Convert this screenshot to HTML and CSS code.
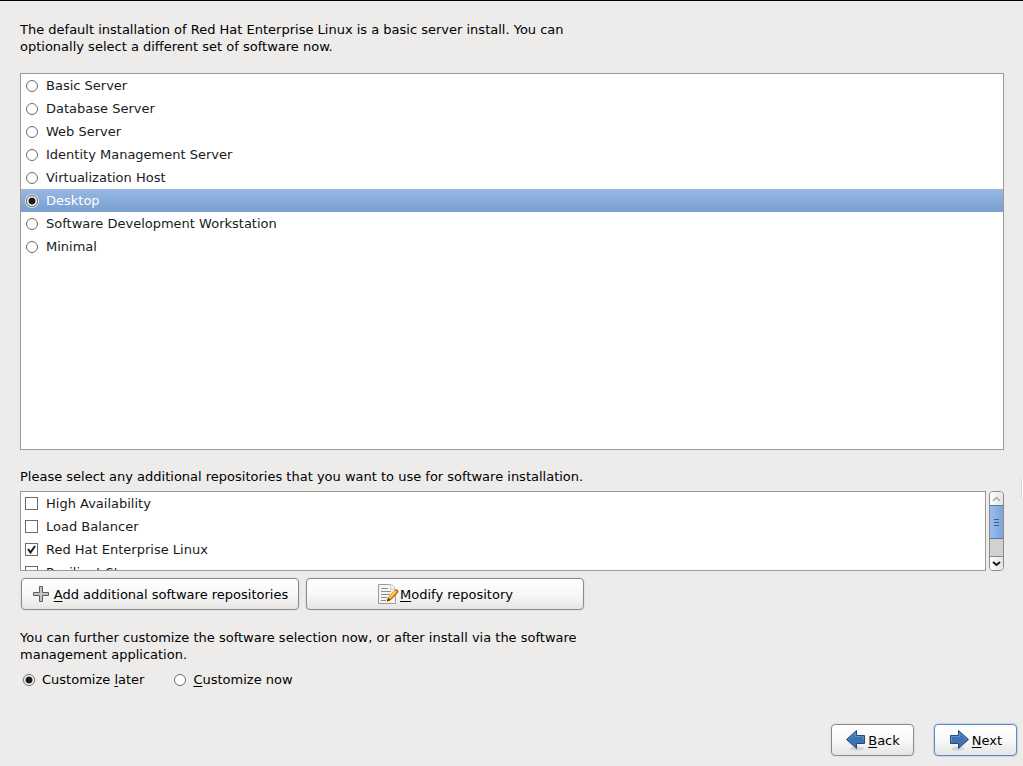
FILE: index.html
```html
<!DOCTYPE html>
<html lang="en">
<head>
    <meta charset="UTF-8">
    <title>Software selection</title>
    <link rel="stylesheet" href="styles.css">
</head>
<body>
    <form class="installer">
        <p class="intro" id="intro">The default installation of Red Hat Enterprise Linux is a basic server install. You can optionally select a different set of software now.</p>

        <div class="task-list" role="radiogroup" aria-labelledby="intro">
            <label class="row"><input type="radio" name="task"> Basic Server</label>
            <label class="row"><input type="radio" name="task"> Database Server</label>
            <label class="row"><input type="radio" name="task"> Web Server</label>
            <label class="row"><input type="radio" name="task"> Identity Management Server</label>
            <label class="row"><input type="radio" name="task"> Virtualization Host</label>
            <label class="row"><input type="radio" name="task" checked> Desktop</label>
            <label class="row"><input type="radio" name="task"> Software Development Workstation</label>
            <label class="row"><input type="radio" name="task"> Minimal</label>
        </div>

        <p class="repo-text">Please select any additional repositories that you want to use for software installation.</p>

        <div class="repos">
            <div class="repo-list">
                <label class="row"><input type="checkbox"> High Availability</label>
                <label class="row"><input type="checkbox"> Load Balancer</label>
                <label class="row"><input type="checkbox" checked> Red Hat Enterprise Linux</label>
                <label class="row"><input type="checkbox"> Resilient Storage</label>
            </div>
            <div class="scrollbar">
                <button type="button" class="step up" aria-label="Scroll up" disabled>
                    <svg width="9" height="6" viewBox="0 0 9 6"><path d="M1 5l3.500-3.500L8 5" fill="none" stroke="#aaa" stroke-width="1.500"/></svg>
                </button>
                <div class="track">
                    <div class="thumb">
                        <svg width="5" height="7" viewBox="0 0 5 7"><path d="M0 .5h5M0 3.500h5M0 6.500h5" stroke="#3a5f93"/></svg>
                    </div>
                </div>
                <button type="button" class="step down" aria-label="Scroll down">
                    <svg width="9" height="6" viewBox="0 0 9 6"><path d="M1 1l3.500 3L8 1" fill="none" stroke="#1a1a1a" stroke-width="2"/></svg>
                </button>
            </div>
        </div>

        <div class="repo-buttons">
            <button type="button" class="button">
                <svg class="add-icon" width="18" height="18" viewBox="0 0 18 18"><path d="M7.500 1.500h3v6h6v3h-6v6h-3v-6h-6v-3h6z" fill="#c4c4c2" stroke="#5c5c5c"/></svg>
                <span><u>A</u>dd additional software repositories</span>
            </button>
            <button type="button" class="button">
                <svg width="22" height="22" viewBox="0 0 22 22">
                    <path d="M1.500 1.500h10q5 0 7 6v13h-17z" fill="#f4f4f2" stroke="#9b9b98"/>
                    <path d="M12.500 1.500q2 2 1 5 3-1 5 1-1-6-6-6z" fill="#fff" stroke="#c0c0be"/>
                    <path d="M4 5.500h7M4 8.500h10M4 11.500h9M4 14.500h6M4 17.500h5" stroke="#8f8f8c"/>
                    <path d="M11.500 14.500l7-7.500q2-1 2.500 2l-7 7.500-3.500 1.500z" fill="#f57900" stroke="#b34700"/>
                    <path d="M12.500 15l6.500-7" stroke="#fcd23e" stroke-width="2"/>
                    <path d="M10 18.500l1-3 2 1.500z" fill="#3b2a1c"/>
                </svg>
                <span><u>M</u>odify repository</span>
            </button>
        </div>

        <p class="customize-text" id="customize">You can further customize the software selection now, or after install via the software management application.</p>

        <div class="customize" role="radiogroup" aria-labelledby="customize">
            <label><input type="radio" name="customize" checked> <span>Customize <u>l</u>ater</span></label>
            <label><input type="radio" name="customize"> <span><u>C</u>ustomize now</span></label>
        </div>

        <div class="navigation">
            <button type="button" class="button">
                <svg width="22" height="22" viewBox="0 0 22 22">
                    <ellipse cx="12" cy="19.500" rx="7" ry="2" fill="#000" opacity=".1"/>
                    <path d="M1.500 10.500L11.500 1.500v5h8v8h-8v5z" fill="#3f72b3" stroke="#204a87"/>
                    <path d="M3.500 10.500l7-6.500v3.500h8v3" fill="none" stroke="#729fcf" opacity=".7"/>
                </svg>
                <span><u>B</u>ack</span>
            </button>
            <button type="submit" class="button default">
                <svg width="22" height="22" viewBox="0 0 22 22">
                    <ellipse cx="9" cy="19.500" rx="7" ry="2" fill="#000" opacity=".1"/>
                    <path d="M19.500 10.500L9.500 1.500v5h-8v8h8v5z" fill="#3f72b3" stroke="#204a87"/>
                    <path d="M2.500 13.500v-6h8V4l7 6.500" fill="none" stroke="#729fcf" opacity=".7"/>
                </svg>
                <span><u>N</u>ext</span>
            </button>
        </div>
    </form>
    <div class="edge-handle"></div>
</body>
</html>
```

FILE: styles.css
```css
* {
    box-sizing: border-box;
}
body {
    margin: 0;
    background: #edeceb;
    color: #000;
    font-family: "DejaVu Sans", sans-serif;
    font-size: 13px;
    line-height: 17px;
}
.installer {
    display: flex;
    flex-direction: column;
    min-height: 100vh;
    border-top: 1px solid #000;
    padding: 20px 19px 10px 20px;
}
p {
    margin: 0;
}
.intro,
.customize-text {
    max-width: 570px;
}

/* lists */
.task-list,
.repo-list {
    background: #fff;
    border: 1px solid #9c9a98;
    color: #1a1a1a;
}
.task-list {
    flex: 1;
    margin: 18px 0;
}
.row {
    display: flex;
    align-items: center;
    gap: 8px;
    height: 23px;
    padding-left: 5px;
}
.task-list .row:has(:checked) {
    background: linear-gradient(#98b8e2, #789fd0);
    color: #fff;
}

/* radio buttons and tick boxes */
input {
    appearance: none;
    flex: none;
    width: 12px;
    height: 12px;
    margin: 1px 0 0;
    border: 1px solid #6b6b6b;
    background: #fff;
}
input[type="radio"] {
    border-radius: 50%;
}
input[type="radio"]:checked {
    background: radial-gradient(circle, #1a1a1a 3px, #fff 4px);
    box-shadow: 0 0 0 1px #e4e4e2;
}
input[type="checkbox"] {
    width: 13px;
    height: 13px;
    margin: 0 0 0 -1px;
}
input[type="checkbox"]:checked {
    background: #fff url("data:image/svg+xml,%3Csvg xmlns='http://www.w3.org/2000/svg' viewBox='0 0 11 11'%3E%3Cpath d='M2 5l2.500 3.500L9 2' fill='none' stroke='%231a1a1a' stroke-width='2'/%3E%3C/svg%3E");
}

/* repositories */
.repos {
    display: flex;
    gap: 3px;
    height: 80px;
    margin-top: 6px;
}
.repo-list {
    flex: 1;
    overflow: hidden;
}
.scrollbar {
    display: flex;
    flex-direction: column;
    width: 15px;
    border: 1px solid #8c8a88;
    border-radius: 4px;
    overflow: hidden;
}
.step {
    display: flex;
    align-items: center;
    justify-content: center;
    height: 13px;
    padding: 0;
    border: 0;
    background: linear-gradient(90deg, #fff, #e6e5e4);
}
.step.down {
    height: 14px;
    border-top: 1px solid #8c8a88;
}
.track {
    flex: 1;
    background: #d2d1d0;
}
.thumb {
    display: flex;
    align-items: center;
    justify-content: center;
    height: 34px;
    border: solid #4c7ab5;
    border-width: 1px 0;
    background: linear-gradient(90deg, #9cbdea, #7ba3d8);
}

/* buttons */
.button {
    display: flex;
    align-items: center;
    justify-content: center;
    gap: 1px;
    height: 32px;
    padding: 0;
    border: 1px solid #8c8a88;
    border-radius: 4px;
    background: linear-gradient(#fff, #f8f8f8 50%, #e6e5e4);
    box-shadow: 0 0 1px 1px #e2e1e0;
    color: #000;
    font: inherit;
}
.add-icon {
    margin-right: 3px;
}
.button.default {
    border-color: #5e87c0;
    box-shadow: 0 0 1px 1px #c5d5ea;
}
.repo-buttons {
    display: flex;
    gap: 7px;
    margin: 7px 0 19px 1px;
}
.repo-buttons .button {
    width: 278px;
}
u {
    text-underline-offset: 2px;
}

/* customize choice */
.customize {
    display: flex;
    gap: 30px;
    margin: 8px 0 36px 3px;
}
.customize label {
    display: flex;
    align-items: center;
    gap: 7px;
}
.navigation {
    display: flex;
    justify-content: flex-end;
    gap: 20px;
    margin-right: -13px;
}
.navigation .button {
    width: 83px;
}

/* pull-out tab on the window's right edge */
.edge-handle {
    position: absolute;
    top: 479px;
    right: 0;
    width: 2px;
    height: 19px;
    border-left: 1px solid #d8d7d6;
    background: #fff;
}
```
